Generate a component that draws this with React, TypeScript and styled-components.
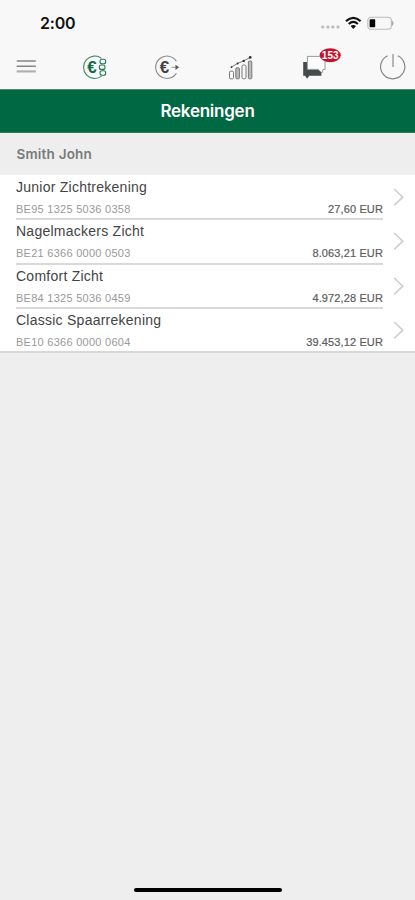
import React from "react";
import styled, { createGlobalStyle } from "styled-components";

const GlobalStyle = createGlobalStyle`
  * { box-sizing: border-box; }
  body { margin: 0; background: #eeeeee; }
`;

const Screen = styled.div`
  display: flex;
  flex-direction: column;
  height: 900px;
  background: #eeeeee;
  font-family: "Liberation Sans", Arial, sans-serif;
  overflow: hidden;
`;

const StatusBar = styled.header`
  display: flex;
  align-items: center;
  justify-content: space-between;
  height: 46px;
  padding: 0 20px 0 40px;
  background: #f8f8f8;
`;

const Clock = styled.time`
  font: 600 16px/20px Inter, sans-serif;
  letter-spacing: -0.2px;
  color: #111;
`;

const StatusIcons = styled.svg`
  display: block;
  width: 75px;
  height: 18px;
`;

const NavBar = styled.nav`
  display: grid;
  grid-template-columns: 67px 72px 73px 74px 77px 28px;
  align-items: start;
  height: 43px;
  padding-left: 16px;
  background: #f8f8f8;
`;

const NavButton = styled.button`
  display: block;
  width: max-content;
  padding: 0;
  border: 0;
  background: none;
`;

const NavIcon = styled.svg`
  display: block;
  height: 42px;
  overflow: visible;
`;

const TitleBar = styled.div`
  display: flex;
  align-items: center;
  justify-content: center;
  height: 44px;
  padding-bottom: 1px;
  background: #006842;
  border-top: 1px solid #4b8b72;
  border-bottom: 1px solid #2f7859;
`;

const Title = styled.h1`
  margin: 0;
  font: 600 17px/22px Inter, sans-serif;
  letter-spacing: -0.25px;
  color: #fff;
`;

const Owner = styled.h2`
  margin: 0;
  height: 42px;
  padding: 0 16.5px;
  font: 600 13.5px/43px Inter, sans-serif;
  letter-spacing: 0.2px;
  color: #777b79;
`;

const Accounts = styled.ul`
  margin: 0;
  padding: 1px 0 0;
  height: 178px;
  list-style: none;
  background: #fff;
  border-bottom: 2px solid #d8d8d8;
`;

const Row = styled.li`
  display: flex;
  height: 44.4px;
  padding: 0 10px 0 16px;

  &:last-child { height: 42px; }
  &:last-child > div { border-bottom: 0; }
`;

const RowBody = styled.div`
  flex: 1;
  border-bottom: 2px solid #d9d9d9;
`;

const Name = styled.div`
  height: 25px;
  font-size: 14px;
  line-height: 23px;
  letter-spacing: 0.25px;
  color: #444;
`;

const Details = styled.div`
  display: flex;
  justify-content: space-between;
  font-size: 11px;
  line-height: 16px;
  white-space: nowrap;
`;

const Iban = styled.span`
  letter-spacing: 0.27px;
  color: #999;
`;

const Amount = styled.span`
  letter-spacing: 0.12px;
  color: #5c5c5c;
  -webkit-text-stroke: 0.2px #5c5c5c;
`;

const Chevron = styled.svg`
  width: 12px;
  height: 20px;
  margin: 11px 0 0 10px;
`;

const Footer = styled.footer`
  display: flex;
  justify-content: center;
  margin-top: auto;
  padding-bottom: 8px;
`;

const HomeIndicator = styled.div`
  width: 148px;
  height: 4px;
  border-radius: 2px;
  background: #000;
`;

const accounts = [
  { name: "Junior Zichtrekening", iban: "BE95 1325 5036 0358", amount: "27,60 EUR" },
  { name: "Nagelmackers Zicht", iban: "BE21 6366 0000 0503", amount: "8.063,21 EUR" },
  { name: "Comfort Zicht", iban: "BE84 1325 5036 0459", amount: "4.972,28 EUR" },
  { name: "Classic Spaarrekening", iban: "BE10 6366 0000 0604", amount: "39.453,12 EUR" },
];

const SystemStatus = () => (
  <StatusIcons viewBox="320 14 75 18">
    <g fill="#bdbdbd">
      <rect x="321.2" y="25.6" width="3" height="3" rx="1" />
      <rect x="326.4" y="25.6" width="3" height="3" rx="1" />
      <rect x="331.4" y="25.6" width="3" height="3" rx="1" />
      <rect x="336.5" y="25.6" width="3" height="3" rx="1" />
    </g>
    <g fill="none" stroke="#111" strokeWidth="2.1">
      <path d="M346 21.1Q353.3 14.5 360.6 21.1" />
      <path d="M348.7 24Q353.3 19.9 357.9 24" />
    </g>
    <path d="M350.6 26.1Q353.3 24.1 356 26.1L353.3 28.9Z" fill="#111" />
    <rect x="367.8" y="17.2" width="23.6" height="12" rx="3.4" fill="none" stroke="#bdbdbd" strokeWidth="1.1" />
    <path d="M391.8 20.2Q395.4 23.2 391.8 26.2Z" fill="#aaa" />
    <rect x="369.6" y="19.2" width="5.6" height="8" rx="0.8" fill="#000" />
  </StatusIcons>
);

const MenuIcon = () => (
  <NavIcon width="20" viewBox="16 46 20 42">
    <path d="M16.7 61H35.8M16.7 66.3H35.8" stroke="#858585" strokeWidth="1.5" />
    <path d="M16.7 71.4H35.8" stroke="#b0b0b0" strokeWidth="2.2" />
  </NavIcon>
);

const euroStyle = { fontFamily: "Liberation Sans", fontWeight: 700, fontSize: 17 };

const AccountsIcon = () => (
  <NavIcon width="24" viewBox="83 46 24 42">
    <path d="M101.6 58.4A11.2 11.2 0 1 0 101.6 76.1" fill="none" stroke="#3c8c68" strokeWidth="1.1" />
    <text x="87.2" y="73.1" fill="#136b45" {...euroStyle}>€</text>
    <g fill="#f8f8f8" stroke="#247a52" strokeWidth="1.1">
      <rect x="100" y="59.3" width="5.7" height="4.4" rx="2" />
      <rect x="99.3" y="65" width="5.7" height="4.4" rx="2" />
      <rect x="100" y="70.8" width="5.7" height="4.4" rx="2" />
    </g>
  </NavIcon>
);

const TransferIcon = () => (
  <NavIcon width="25" viewBox="155 46 25 42">
    <path d="M176.4 61.3A11.2 11.2 0 1 0 176.4 73.2" fill="none" stroke="#888" strokeWidth="1.1" />
    <text x="159.8" y="73.1" fill="#444" {...euroStyle}>€</text>
    <path d="M171.5 67.3H177" stroke="#999" strokeWidth="1" />
    <path d="M175.5 64.7L179 67.3L175.5 69.9Z" fill="#555" />
  </NavIcon>
);

const ChartIcon = () => (
  <NavIcon width="26" viewBox="228 46 26 42">
    <g fill="none" stroke="#777" strokeWidth="1">
      <rect x="229.5" y="71.2" width="4" height="7.6" rx="1" />
      <rect x="235.8" y="67.8" width="3.6" height="11" rx="1" fill="#bbb" />
      <rect x="242" y="65" width="4" height="13.8" rx="1.5" />
      <rect x="248.4" y="61" width="3.4" height="17.8" rx="1" fill="#bbb" />
      <path d="M231 67.3L237.6 63.4L243.7 60.9L250.4 57.3" />
    </g>
    <g fill="#333">
      <circle cx="231.5" cy="67.2" r="0.9" />
      <circle cx="237.6" cy="63.4" r="1" />
      <circle cx="243.7" cy="60.9" r="1.2" />
      <circle cx="250.2" cy="57.4" r="1.4" />
    </g>
  </NavIcon>
);

const MessagesIcon = () => (
  <NavIcon width="40" viewBox="302 46 40 42">
    <path d="M303.2 62H307.4V69H318L321.4 71.6V75.7H309.3L307 78.8L305.2 75.7H303.2Z" fill="#454a4b" />
    <path d="M307.4 56.4H325V69.4H323L322 73L318.2 69.4H307.4Z" fill="#fcfcfc" stroke="#999" strokeWidth="1" />
    <ellipse cx="330.2" cy="55.3" rx="10.5" ry="7" fill="#c4122d" />
    <text x="330.2" y="59" textAnchor="middle" fill="#fff" fontFamily="Liberation Sans" fontWeight="700" fontSize="10">153</text>
  </NavIcon>
);

const PowerIcon = () => (
  <NavIcon width="28" viewBox="379 46 28 42">
    <path d="M387.7 55.7A12.1 12.1 0 1 0 397.7 55.7" fill="none" stroke="#868686" strokeWidth="1.2" />
    <path d="M393 54V67" stroke="#929292" strokeWidth="1.3" />
  </NavIcon>
);

const navItems = [
  { label: "Menu", Icon: MenuIcon },
  { label: "Rekeningen", Icon: AccountsIcon },
  { label: "Overschrijving", Icon: TransferIcon },
  { label: "Beleggingen", Icon: ChartIcon },
  { label: "Berichten", Icon: MessagesIcon },
  { label: "Afmelden", Icon: PowerIcon },
];

export default function App() {
  return (
    <>
      <GlobalStyle />
      <Screen>
        <StatusBar>
          <Clock>2:00</Clock>
          <SystemStatus />
        </StatusBar>
        <NavBar>
          {navItems.map(({ label, Icon }) => (
            <NavButton key={label} aria-label={label}>
              <Icon />
            </NavButton>
          ))}
        </NavBar>
        <TitleBar>
          <Title>Rekeningen</Title>
        </TitleBar>
        <Owner>Smith John</Owner>
        <Accounts>
          {accounts.map((account) => (
            <Row key={account.iban}>
              <RowBody>
                <Name>{account.name}</Name>
                <Details>
                  <Iban>{account.iban}</Iban>
                  <Amount>{account.amount}</Amount>
                </Details>
              </RowBody>
              <Chevron viewBox="0 0 12 20">
                <path d="M1.2 2L9.7 10.2L1.2 18.4" fill="none" stroke="#cfcfcf" strokeWidth="1.7" />
              </Chevron>
            </Row>
          ))}
        </Accounts>
        <Footer>
          <HomeIndicator />
        </Footer>
      </Screen>
    </>
  );
}
